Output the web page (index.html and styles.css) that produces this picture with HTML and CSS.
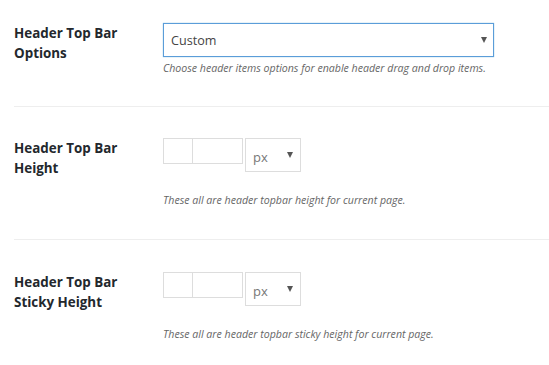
FILE: index.html
```html
<!DOCTYPE html>
<html lang="en">
<head>
    <meta charset="UTF-8">
    <meta name="viewport" content="width=device-width, initial-scale=1.0">
    <title>Header Top Bar Settings</title>
    <link rel="stylesheet" href="styles.css">
</head>
<body>
    <main class="settings">
        <!-- Options -->
        <div class="setting-row">
            <div class="setting-label">Header Top Bar Options</div>
            <div class="setting-field">
                <div class="select-box select-wide is-focused">
                    <span class="select-value">Custom</span>
                    <span class="select-arrow"></span>
                </div>
                <p class="description">Choose header items options for enable header drag and drop items.</p>
            </div>
        </div>

        <!-- Height -->
        <div class="setting-row">
            <div class="setting-label">Header Top Bar Height</div>
            <div class="setting-field">
                <div class="dimension">
                    <input type="text" class="dim-input dim-small">
                    <input type="text" class="dim-input dim-large">
                    <div class="select-box select-unit">
                        <span class="select-value">px</span>
                        <span class="select-arrow"></span>
                    </div>
                </div>
                <p class="description description-spaced">These all are header topbar height for current page.</p>
            </div>
        </div>

        <!-- Sticky height -->
        <div class="setting-row">
            <div class="setting-label">Header Top Bar Sticky Height</div>
            <div class="setting-field">
                <div class="dimension">
                    <input type="text" class="dim-input dim-small">
                    <input type="text" class="dim-input dim-large">
                    <div class="select-box select-unit">
                        <span class="select-value">px</span>
                        <span class="select-arrow"></span>
                    </div>
                </div>
                <p class="description description-spaced">These all are header topbar sticky height for current page.</p>
            </div>
        </div>
    </main>
</body>
</html>
```

FILE: styles.css
```css
:root {
    --text-color: #23282d;
    --muted-color: #666;
    --border-color: #ddd;
    --focus-color: #5b9dd9;
    --divider-color: #eee;
}

* {
    margin: 0;
    padding: 0;
    box-sizing: border-box;
}

body {
    font-family: 'Open Sans', 'Noto Sans', sans-serif;
    background: #fff;
    color: var(--text-color);
}

.settings {
    padding-left: 14px;
}

.setting-row {
    display: flex;
    padding: 31px 0 31px;
    border-bottom: 1px solid var(--divider-color);
}

.setting-row:first-child {
    padding-top: 23px;
    padding-bottom: 30px;
}

.setting-row:last-child {
    padding-top: 32px;
    border-bottom: none;
}

.setting-label {
    width: 149px;
    flex-shrink: 0;
    font-size: 13.4px;
    font-weight: bold;
    line-height: 20px;
    padding-right: 40px;
}

.setting-field {
    display: flex;
    flex-direction: column;
}

.select-box {
    display: flex;
    align-items: center;
    justify-content: space-between;
    border: 1px solid var(--border-color);
    background: #fff;
    color: #444;
}

.select-wide {
    width: 331px;
    height: 34px;
    padding: 0 6px 0 7px;
    font-size: 12.6px;
}

.select-wide.is-focused {
    border-color: var(--focus-color);
    box-shadow: 0 0 1px rgba(30, 140, 190, 0.6);
}

.select-unit {
    width: 56px;
    height: 34px;
    padding: 3px 7px 0 7px;
    font-size: 13px;
    color: #777;
    margin-left: 2px;
}

.select-unit .select-arrow {
    align-self: flex-start;
    margin-top: 10px;
}

.select-arrow {
    width: 0;
    height: 0;
    border-left: 3.5px solid transparent;
    border-right: 3.5px solid transparent;
    border-top: 6px solid #555;
}

.dimension {
    display: flex;
    align-items: flex-start;
}

.dim-input {
    height: 26px;
    border: 1px solid var(--border-color);
    background: #fff;
    outline: none;
}

.dim-small {
    width: 30px;
}

.dim-large {
    width: 51px;
    margin-left: -1px;
}

.description {
    margin-top: 3px;
    font-size: 10.6px;
    font-style: italic;
    line-height: 16px;
    color: var(--muted-color);
}

.description-spaced {
    margin-top: 20px;
}
```
